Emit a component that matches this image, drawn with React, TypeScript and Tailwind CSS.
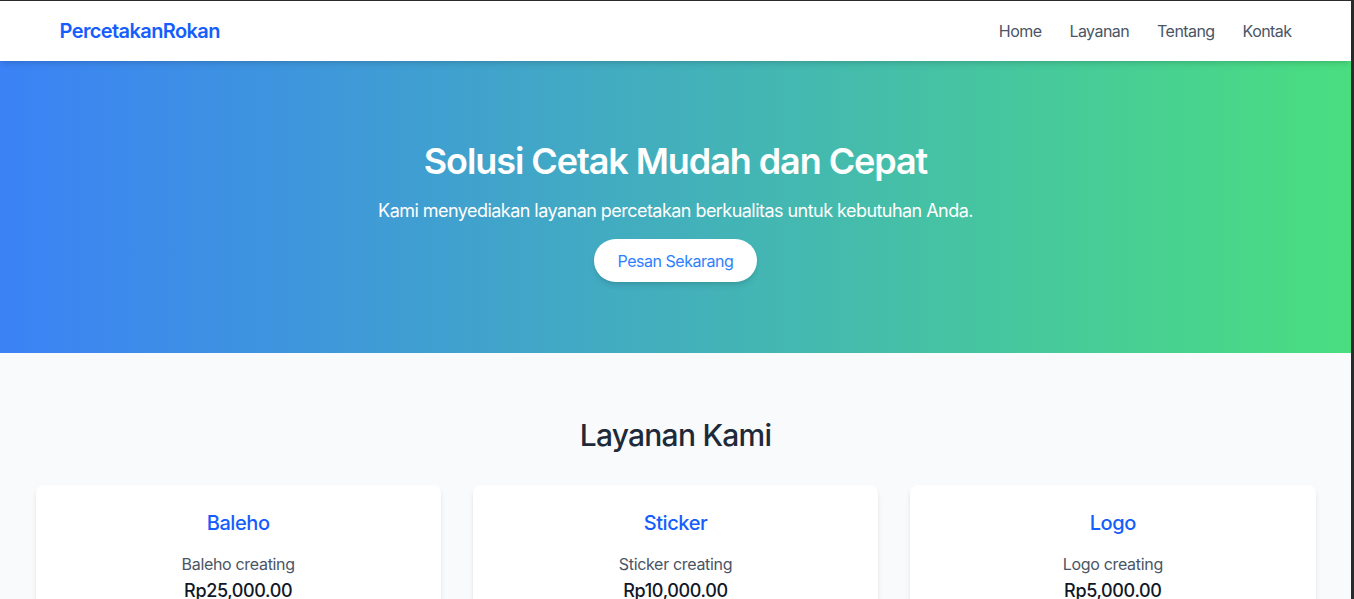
const services = [
  { name: 'Baleho', desc: 'Baleho creating', price: 'Rp25,000.00' },
  { name: 'Sticker', desc: 'Sticker creating', price: 'Rp10,000.00' },
  { name: 'Logo', desc: 'Logo creating', price: 'Rp5,000.00' },
];

const App = () => {
  return (
    <div
      className="min-h-screen bg-gray-50 border-t border-r-[3px] border-[#2b2b2b]"
      style={{ fontFamily: 'Inter, "Noto Sans", sans-serif' }}
    >
      {/* Navbar */}
      <header className="bg-white shadow-md relative z-10">
        <div className="max-w-7xl mx-auto px-6 py-4 flex items-center justify-between">
          <a className="text-xl font-semibold tracking-[-0.03em] text-blue-600">PercetakanRokan</a>
          <nav className="flex items-center gap-7 text-gray-600 tracking-[-0.035em]">
            <a>Home</a>
            <a>Layanan</a>
            <a>Tentang</a>
            <a>Kontak</a>
          </nav>
        </div>
      </header>

      {/* Hero */}
      <section className="bg-[linear-gradient(to_right,#3b82f6,#4ade80)] text-white text-center pt-20 pb-[71px]">
        <h1 className="text-4xl font-semibold tracking-[-0.03em] mb-4">Solusi Cetak Mudah dan Cepat</h1>
        <p className="text-lg tracking-[-0.03em] mb-[14px]">
          Kami menyediakan layanan percetakan berkualitas untuk kebutuhan Anda.
        </p>
        <button className="bg-white text-blue-500 tracking-[-0.03em] px-6 h-[43px] rounded-full shadow-md">
          Pesan Sekarang
        </button>
      </section>

      {/* Services */}
      <section className="pt-16 pb-16">
        <div className="max-w-7xl mx-auto">
          <h2 className="text-3xl font-medium tracking-[-0.025em] text-gray-800 text-center mb-8">Layanan Kami</h2>
          <div className="grid grid-cols-3 gap-8">
            {services.map((s) => (
              <div key={s.name} className="bg-white rounded-lg shadow-md p-6 text-center">
                <h3 className="text-xl font-medium tracking-[-0.02em] text-blue-600 mb-[15px]">{s.name}</h3>
                <p className="text-gray-600 tracking-[-0.02em]">{s.desc}</p>
                <p className="text-lg font-medium tracking-[-0.02em] text-gray-900 mt-px">{s.price}</p>
              </div>
            ))}
          </div>
        </div>
      </section>
    </div>
  );
};

export default App;
